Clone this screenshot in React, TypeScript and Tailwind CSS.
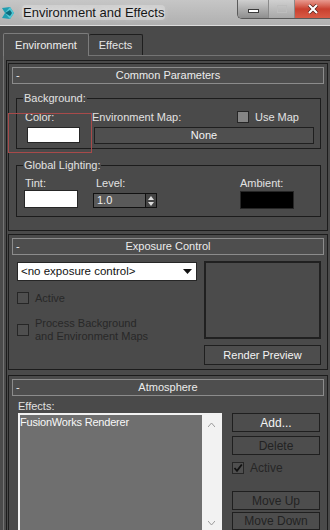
import React from "react";

const font = { fontFamily: '"Liberation Sans", Arial, sans-serif' };

function RolloutHeader({ title }: { title: string }) {
  return (
    <div className="mx-[3px] mt-[3px] grid h-[17px] grid-cols-[16px_1fr_16px] items-center border border-[#8c8c8c] bg-[#4e4e4e] text-[#ececec]">
      <span className="pl-[3px] leading-none">-</span>
      <span className="text-center leading-none">{title}</span>
      <span />
    </div>
  );
}

function Check({ checked, light }: { checked?: boolean; light?: boolean }) {
  return (
    <div
      className={`flex h-[12px] w-[12px] shrink-0 items-center justify-center border border-[#262626] ${
        light ? "bg-[#858585]" : "bg-[#4f4f4f]"
      }`}
    >
      {checked && (
        <svg width="10" height="10" viewBox="0 0 10 10">
          <path d="M1.5 5 L4 7.8 L8.8 1.5" fill="none" stroke="#111" strokeWidth="1.8" />
        </svg>
      )}
    </div>
  );
}

function Btn({ label, disabled, className = "" }: { label: string; disabled?: boolean; className?: string }) {
  return (
    <div
      className={`flex items-center justify-center border border-[#1f1f1f] bg-[#4d4d4d] leading-none ${
        disabled ? "text-[#232323]" : "text-[#f4f4f4]"
      } ${className}`}
    >
      {label}
    </div>
  );
}

export default function App() {
  return (
    <div className="relative h-[530px] w-[330px] overflow-hidden bg-[#4a4a4a] text-[11px] text-[#e2e2e2]" style={font}>
      {/* title bar */}
      <div className="flex h-[25px] items-start bg-gradient-to-b from-[#c6c6c6] to-[#b0b0b0]">
        <svg width="14" height="14" viewBox="0 0 14 14" className="ml-[1px] mt-[6px]">
          <path d="M1 2 L9 1 L13 7 L9 13 L1 12 L4 7 Z" fill="#1f9db0" />
          <path d="M4 7 L9 1 L13 7 L9 13 Z" fill="#56c7d3" />
          <path d="M4 7 L9 4 L11 7 L9 10 Z" fill="#0b6a7c" />
        </svg>
        <span
          className="ml-[7px] mt-[5px] rounded-sm bg-[#d8d8d8]/60 px-[1px] text-[13px] leading-[15px] text-[#161616]"
          style={{ textShadow: "0 0 6px #fff" }}
        >
          Environment and Effects
        </span>
        <div className="ml-auto flex h-[19px] overflow-hidden rounded-bl-[5px] border-b border-l border-[#5a5a5a]">
          <div className="flex w-[31px] items-center justify-center border-r border-[#8a8a8a] bg-gradient-to-b from-[#cfcfcf] to-[#8e8e8e]">
            <div className="mt-[3px] h-[4px] w-[11px] border border-[#3a3a3a] bg-white" />
          </div>
          <div className="flex w-[26px] items-center justify-center border-r border-[#8a8a8a] bg-gradient-to-b from-[#d0d0d0] to-[#a8a8a8]">
            <div className="h-[8px] w-[10px] border border-[#bdbdbd]" />
          </div>
          <div className="flex w-[35px] items-center justify-center bg-gradient-to-b from-[#e89a90] via-[#c9402f] to-[#d85a45]">
            <svg width="12" height="10" viewBox="0 0 12 10">
              <path d="M2 1 L10 9 M10 1 L2 9" stroke="#4a1a14" strokeWidth="3.4" />
              <path d="M2 1 L10 9 M10 1 L2 9" stroke="#fff" strokeWidth="2.2" />
            </svg>
          </div>
        </div>
      </div>
      <div className="h-[1px] bg-[#dcdcdc]" />

      {/* tabs */}
      <div className="flex items-end pl-[3px] pt-[7px]">
        <div className="relative z-10 -mb-[1px] flex h-[23px] w-[86px] items-center justify-center rounded-t-[2px] border-l border-r border-t border-[#7c7c7c] bg-[#4a4a4a] text-[#eeeeee]">
          Environment
        </div>
        <div className="flex h-[21px] w-[54px] items-center justify-center rounded-t-[2px] border-r border-t border-[#1e1e1e] bg-[#484848] text-[#e6e6e6]">
          Effects
        </div>
      </div>

      {/* panel */}
      <div className="ml-[3px] border-l border-t border-[#747474] pl-[2px] pt-[4px]">
        <div className="border-l border-t border-[#1c1c1c] pl-[1px] pt-[2px]">
          {/* Common Parameters */}
          <div className="w-[320px] border border-[#1c1c1c]">
            <RolloutHeader title="Common Parameters" />
            <fieldset className="ml-[7px] mr-[6px] mt-[8px] border border-[#1c1c1c] pb-[4px]">
              <legend className="ml-[6px] px-[1px] leading-[12px]">Background:</legend>
              <div className="mt-[6px] flex pl-[8px]">
                <div className="w-[67px]">
                  <div className="h-[14px] leading-[14px]">Color:</div>
                  <div className="ml-[2px] mt-[3px] h-[16px] w-[53px] border border-[#262626] bg-white" />
                </div>
                <div className="flex-1 pr-[6px]">
                  <div className="flex h-[14px] items-center">
                    <span>Environment Map:</span>
                    <div className="ml-auto mr-[15px] flex items-center gap-[6px]">
                      <Check light />
                      <span>Use Map</span>
                    </div>
                  </div>
                  <Btn label="None" className="ml-[2px] mt-[3px] h-[17px] bg-[#4f4f4f] text-[#ececec]" />
                </div>
              </div>
            </fieldset>
            <fieldset className="mb-[13px] ml-[7px] mr-[6px] mt-[10px] border border-[#1c1c1c] pb-[7px]">
              <legend className="ml-[6px] px-[1px] leading-[12px]">Global Lighting:</legend>
              <div className="mt-[5px] flex pl-[7px]">
                <div className="w-[69px]">
                  <div className="h-[14px] pl-[1px] leading-[14px]">Tint:</div>
                  <div className="h-[18px] w-[54px] border border-[#262626] bg-white" />
                </div>
                <div className="w-[147px]">
                  <div className="h-[14px] pl-[3px] leading-[14px]">Level:</div>
                  <div className="mt-[3px] flex h-[15px]">
                    <div className="flex w-[53px] items-center border border-[#111] bg-[#595959] pl-[3px] text-[#f0f0f0]">1.0</div>
                    <div className="flex w-[11px] flex-col items-center justify-center gap-[2px] border-y border-r border-[#111] bg-[#444]">
                      <svg width="6" height="4" viewBox="0 0 6 4"><path d="M0 4 L3 0 L6 4 Z" fill="#ddd" /></svg>
                      <svg width="6" height="4" viewBox="0 0 6 4"><path d="M0 0 L3 4 L6 0 Z" fill="#ddd" /></svg>
                    </div>
                  </div>
                </div>
                <div>
                  <div className="h-[14px] leading-[14px]">Ambient:</div>
                  <div className="mt-[1px] h-[18px] w-[54px] border border-[#262626] bg-black" />
                </div>
              </div>
            </fieldset>
          </div>

          {/* Exposure Control */}
          <div className="mt-[3px] w-[320px] border border-[#1c1c1c]">
            <RolloutHeader title="Exposure Control" />
            <div className="flex pb-[4px]">
              <div className="ml-[8px] mt-[7px] w-[180px]">
                <div className="flex h-[19px] items-center justify-between border border-[#262626] bg-white pl-[3px] pr-[4px] text-[11.5px] text-[#111]">
                  <span>&lt;no exposure control&gt;</span>
                  <svg width="9" height="5" viewBox="0 0 9 5"><path d="M0 0 L9 0 L4.5 5 Z" fill="#111" /></svg>
                </div>
                <div className="mt-[9px] flex items-center gap-[6px] text-[#282828]">
                  <Check />
                  <span>Active</span>
                </div>
                <div className="mt-[10px] flex items-center gap-[6px] text-[#282828]">
                  <Check />
                  <span className="leading-[13px]">
                    Process Background
                    <br />
                    and Environment Maps
                  </span>
                </div>
              </div>
              <div className="ml-[7px] mt-[6px] w-[117px]">
                <div className="h-[78px] border-2 border-[#202020] bg-[#4b4b4b]" />
                <Btn label="Render Preview" className="mt-[6px] h-[20px] text-[#eeeeee]" />
              </div>
            </div>
          </div>

          {/* Atmosphere */}
          <div className="mt-[5px] h-[200px] w-[320px] border border-[#1c1c1c]">
            <RolloutHeader title="Atmosphere" />
            <div className="ml-[9px] mt-[3px] h-[14px] leading-[14px]">Effects:</div>
            <div className="flex">
              <div className="ml-[9px] flex h-[130px] w-[204px] border-2 border-[#f2f2f2]">
                <div className="flex-1 bg-[#6f6f6f] text-[#f8f8f8]">
                  <div className="leading-[14px] tracking-[-0.2px]">FusionWorks Renderer</div>
                </div>
                <div className="flex w-[18px] flex-col items-center bg-[#f2f2f2] pt-[8px]">
                  <svg width="7" height="4" viewBox="0 0 7 4"><path d="M0 4 L3.5 0 L7 4" fill="none" stroke="#9a9a9a" /></svg>
                  <svg width="7" height="4" viewBox="0 0 7 4" className="mt-[94px]"><path d="M0 0 L3.5 4 L7 0" fill="none" stroke="#9a9a9a" /></svg>
                </div>
              </div>
              <div className="ml-[10px] w-[88px]">
                <Btn label="Add..." className="h-[19px] text-[12px]" />
                <Btn label="Delete" disabled className="mt-[4px] h-[19px] text-[12px]" />
                <div className="mt-[7px] flex h-[12px] items-center gap-[6px] text-[12px] text-[#262626]">
                  <Check checked />
                  <span>Active</span>
                </div>
                <Btn label="Move Up" disabled className="mt-[17px] h-[19px] text-[12px]" />
                <Btn label="Move Down" disabled className="mt-[2px] h-[18px] text-[12px]" />
              </div>
            </div>
          </div>
        </div>
      </div>

      {/* red highlight annotation */}
      <div className="absolute left-[8px] top-[113px] h-[40px] w-[84px] border border-[#a84a4a]" />
    </div>
  );
}
